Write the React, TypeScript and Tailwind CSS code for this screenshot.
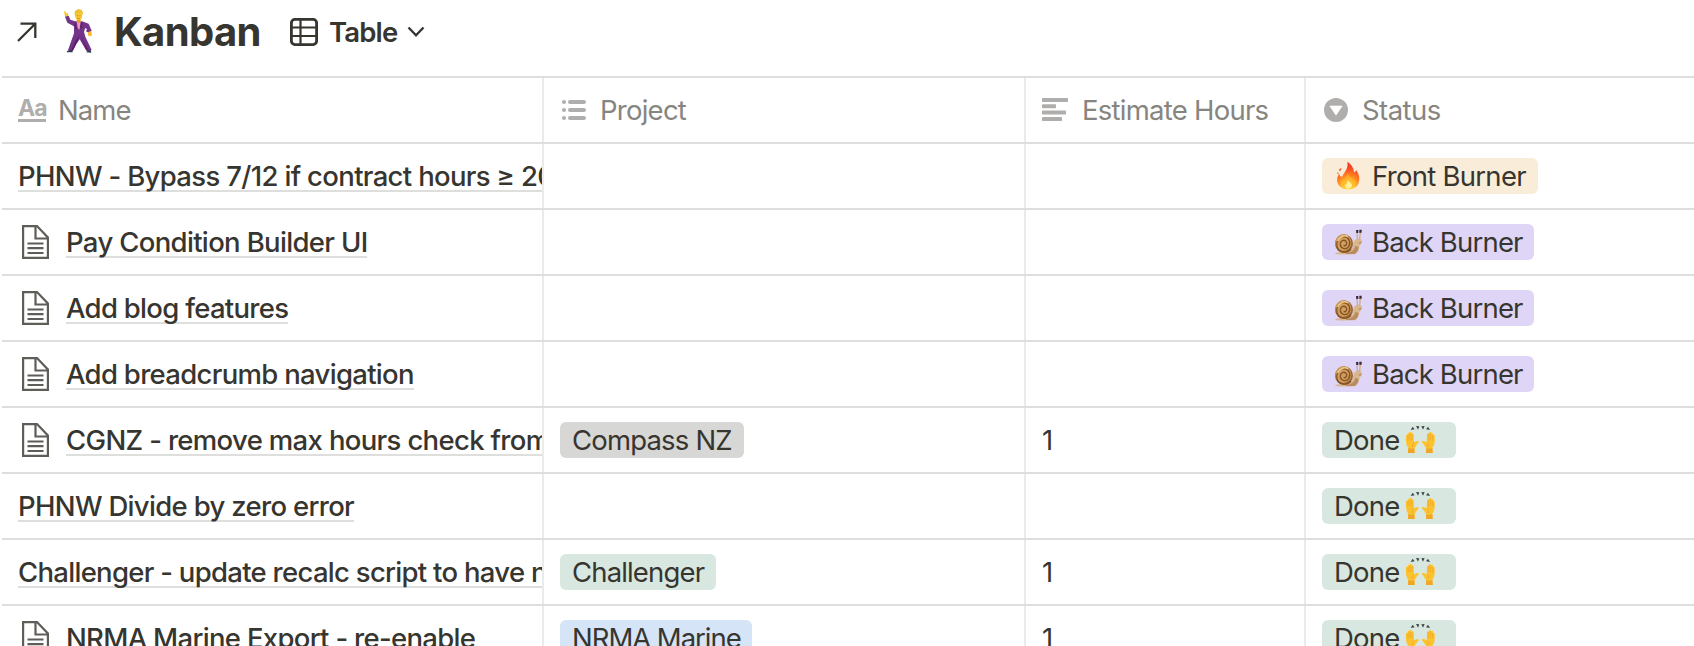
import type { ReactNode } from "react";

const Dancer = () => (
  <svg width="44" height="54" viewBox="0 0 132 162" className="shrink-0">
    <path d="M39 138 L33 142 L32 145 L50 145 L49 137Z M92 137 L94 142 L90 145 L106 146 L104 136Z" fill="#2c3d50" />
    <path d="M24 23 L28 20 L29 27 L36 28 L37 35 L28 40Z" fill="#f8c02c" />
    <path d="M27 38 L38 35 L43 47 L57 52 L78 52 L98 59 L107 80 L100 88 L90 82 L93 76 L88 72 L84 83 L88 98 L107 138 L91 140 L71 106 L61 120 L51 140 L36 139 L45 113 L54 88 L54 67 L34 56Z" fill="#74348a" />
    <path d="M70 94 L64 113 L50 140 L45 140 L58 112Z M73 94 L82 110 L97 138 L92 139Z" fill="#552066" />
    <path d="M62 50 L75 50 L70 78 L65 72Z" fill="#ef9ac6" />
    <path d="M57 54 L64 76 L60 77 L54 64Z M75 53 L72 76 L79 71 L80 57Z" fill="#5c2569" />
    <path d="M63 44 H74 V53 L68 57 L62 52Z" fill="#e49d1c" />
    <ellipse cx="68" cy="35" rx="10.5" ry="14" fill="#fbc62f" />
    <path d="M56 33 C54 20 61 16 69 16 C79 16 83 25 80 34 L76 27 L62 27 L60 38Z" fill="#ecc138" />
    <path d="M64 42 Q68 46 72 42" stroke="#8a5a10" strokeWidth="1.5" fill="none" />
    <path d="M64 35 h2 M71 35 h2" stroke="#6d4710" strokeWidth="2" />
    <path d="M97 84 L105 81 L108 90 L106 97 L101 95 L99 97 L95 92Z" fill="#f8b92c" />
  </svg>
);

const Fire = () => (
  <svg width="40" height="36" viewBox="0 0 120 108" className="shrink-0">
    <defs>
      <radialGradient id="fire" gradientUnits="userSpaceOnUse" cx="61" cy="86" r="68">
        <stop offset="0" stopColor="#fff36a" />
        <stop offset="0.28" stopColor="#ffc02c" />
        <stop offset="0.52" stopColor="#ff7f22" />
        <stop offset="0.8" stopColor="#fb4c22" />
        <stop offset="1" stopColor="#ef3b20" />
      </radialGradient>
    </defs>
    <path d="M58 11 C64 15 77 25 78 42 C80 44 83 41 84 36 C95 50 96 65 91 77 C86 89 74 94 61 94 C44 94 31 85 28 71 C26 61 29 53 34 47 C35 53 38 57 42 56 C49 43 62 30 58 11Z" fill="url(#fire)" />
    <path d="M40 30 C36 31 32 35 33 39 C37 40 41 36 40 30Z M29 42 C27 45 28 49 31 49 C33 47 32 44 29 42Z" fill="#fb5a30" />
    <path d="M59 45 C62 56 74 60 75 72 C79 70 80 66 80 62 C86 76 77 91 62 91 C45 91 38 78 43 66 C45 71 48 73 51 71 C50 61 59 57 59 45Z" fill="#ffb72b" opacity="0.75" />
    <path d="M61 65 C62 73 72 74 72 82 C72 89 67 91 61 91 C53 91 49 85 51 78 C53 82 56 81 56 77 C56 73 59 70 61 65Z" fill="#fff6a0" opacity="0.9" />
  </svg>
);

const Snail = () => (
  <svg width="40" height="36" viewBox="0 0 120 108" className="shrink-0">
    <path d="M20 89 C28 82 40 86 53 84 C68 83 74 76 75 64 C76 53 79 47 86 45 C94 42 103 46 102 53 C101 60 95 62 94 68 C92 82 87 91 75 91 C55 92 35 92 20 89Z" fill="#d9b78e" />
    <path d="M54 86 C70 86 78 80 82 66 L92 68 C90 83 84 90 74 90 L54 90Z" fill="#b98b62" />
    <path d="M88 46 L87 24 M95 46 L97 23" stroke="#c9a680" strokeWidth="3.5" />
    <path d="M84 18 h7 v9 h-6Z M94 17 h7 v9 h-7Z" fill="#3b2a36" />
    <ellipse cx="48" cy="59" rx="27" ry="28" fill="#996330" />
    <ellipse cx="46" cy="56" rx="24" ry="25" fill="#cf9d5c" />
    <path d="M69 74 C62 88 37 88 29 73 C21 57 32 38 48 38 C63 39 70 55 62 68 C55 78 39 75 37 62 C36 51 47 45 54 52 C60 59 53 68 47 64" fill="none" stroke="#855225" strokeWidth="4" />
    <path d="M29 51 C34 39 48 31 60 38" fill="none" stroke="#ebc88d" strokeWidth="5" />
    <path d="M93 57 Q97 58 100 55" stroke="#80552e" strokeWidth="2" fill="none" />
  </svg>
);

const Hands = () => (
  <svg width="40" height="36" viewBox="0 0 120 108" className="shrink-0">
    <path d="M32 24 L38 14 L44 22Z M48 12 L58 13 L54 23Z M64 13 L74 12 L69 23Z M78 22 L84 14 L90 24Z" fill="#3f474a" />
    <g id="hand">
      <path d="M24 93 L25 77 C18 70 17 57 18 41 C18 37 23 37 23 42 V36 C23 32 28 31 29 36 V32 C30 28 35 29 35 33 V37 C36 32 41 33 41 38 L42 61 C45 60 49 56 54 57 C59 59 55 63 51 67 C48 72 46 76 43 79 L44 93Z" fill="#fcc32e" />
      <path d="M24 39 V55 M30 35 V54 M36 36 V55" stroke="#e8a022" strokeWidth="1.8" />
      <path d="M25 78 Q34 82 43 78 L44 93 H24Z" fill="#f0a629" />
      <path d="M42 62 C37 65 36 71 38 75" fill="none" stroke="#e89e23" strokeWidth="2" />
    </g>
    <use href="#hand" transform="translate(122 0) scale(-1 1)" />
  </svg>
);

const Doc = () => (
  <svg width="27" height="34" viewBox="0 0 27 34" fill="none" stroke="#5f5d58" strokeWidth="2.2" className="ml-1 mr-[17px] shrink-0">
    <path d="M1.1 1.1 H15 L25.9 12.5 V32.9 H1.1Z M13.5 1 V13.5 H26" />
    <path d="M5.5 18.5 H21.5 M5.5 23.2 H21.5 M5.5 28 H21.5" />
  </svg>
);

type Row = { name: string; nameCls: string; doc?: boolean; project?: ReactNode; hours?: string; status: ReactNode };

const Tag = ({ cls, children }: { cls: string; children: ReactNode }) => (
  <div className={`flex h-9 shrink-0 items-center rounded-[6px] ${cls}`}>{children}</div>
);

const Front = () => (
  <Tag cls="w-[216px] bg-[#f9edd9] pl-[6px]">
    <Fire />
    <span className="ml-1 tracking-[-0.72px]">Front Burner</span>
  </Tag>
);
const Back = () => (
  <Tag cls="w-[212px] bg-[#dfd6f7] pl-[6px]">
    <Snail />
    <span className="ml-1 tracking-[-0.82px]">Back Burner</span>
  </Tag>
);
const Done = () => (
  <Tag cls="w-[134px] bg-[#d9e7e1] pl-3">
    <span className="w-[66px] tracking-[-0.8px]">Done</span>
    <Hands />
  </Tag>
);

const rows: Row[] = [
  { name: "PHNW - Bypass 7/12 if contract hours ≥ 20", nameCls: "tracking-[-0.67px]", status: <Front /> },
  { name: "Pay Condition Builder UI", nameCls: "tracking-[-0.66px]", doc: true, status: <Back /> },
  { name: "Add blog features", nameCls: "tracking-[-0.7px]", doc: true, status: <Back /> },
  { name: "Add breadcrumb navigation", nameCls: "tracking-[-0.69px]", doc: true, status: <Back /> },
  {
    name: "CGNZ - remove max hours check from",
    nameCls: "tracking-[-0.66px]",
    doc: true,
    project: <Tag cls="w-[184px] bg-[#d7d7d5] pl-3 tracking-[-0.82px]">Compass NZ</Tag>,
    hours: "1",
    status: <Done />,
  },
  { name: "PHNW Divide by zero error", nameCls: "tracking-[-0.68px]", status: <Done /> },
  {
    name: "Challenger - update recalc script to have new",
    nameCls: "tracking-[-0.71px]",
    project: <Tag cls="w-[156px] bg-[#d9e7e1] pl-3 tracking-[-0.85px]">Challenger</Tag>,
    hours: "1",
    status: <Done />,
  },
  {
    name: "NRMA Marine Export - re-enable",
    nameCls: "tracking-[-0.69px]",
    doc: true,
    project: <Tag cls="w-[192px] bg-[#d6e4f7] pl-3 tracking-[-1.02px]">NRMA Marine</Tag>,
    hours: "1",
    status: <Done />,
  },
];

const grid = "grid h-[66px] shrink-0 grid-cols-[542px_482px_280px_1fr] border-b-2 border-[#dededd]";
const cell = "flex min-w-0 items-center overflow-hidden border-r-2 border-[#ebebea] pl-4";

export default function App() {
  return (
    <div className="flex h-[646px] w-full flex-col overflow-hidden whitespace-nowrap bg-white pl-[2px] font-['Inter',sans-serif] text-[27.5px] leading-[36px] text-[#37352f]">
      <header className="flex h-[76px] shrink-0 items-start pl-[15px]">
        <svg width="20" height="20" viewBox="0 0 20 20" fill="none" stroke="#37352f" strokeWidth="2.3" className="mt-[22px] shrink-0">
          <path d="M1 19 L18 2 M3.5 1.6 H18.3 V16" />
        </svg>
        <div className="ml-[19px] mt-1 flex">
          <Dancer />
        </div>
        <h1 className="ml-[14px] mt-[7px] w-[176px] text-[40px] font-bold leading-[49px] tracking-[-0.65px]">Kanban</h1>
        <svg width="28" height="28" viewBox="0 0 28 28" fill="none" stroke="#37352f" className="mt-[18px] shrink-0">
          <rect x="1.4" y="1.4" width="25.2" height="25.2" rx="3.5" strokeWidth="2.8" />
          <path d="M10.5 2 V26 M2 9.5 H26 M2 18 H26" strokeWidth="2.2" />
        </svg>
        <span className="ml-[11px] mt-[14px] w-[75px] font-semibold tracking-[-0.85px]">Table</span>
        <svg width="18" height="12" viewBox="0 0 18 12" fill="none" stroke="#37352f" strokeWidth="2.3" className="ml-[3px] mt-[26px] shrink-0">
          <path d="M1.5 1.5 L9 9.3 L16.5 1.5" />
        </svg>
      </header>

      <div className={`${grid} h-[68px] border-t-2 text-[#868580]`}>
        <div className={cell}>
          <span className="-mt-[2px] h-[26px] w-7 shrink-0 border-b-[3px] border-[#afaeac] text-[23px] font-bold leading-[24px] tracking-[-1px] text-[#afaeac]">Aa</span>
          <span className="ml-3 tracking-[-0.9px]">Name</span>
        </div>
        <div className={cell}>
          <svg width="24" height="20" viewBox="0 0 24 20" fill="#afaeac" className="ml-[2px] shrink-0">
            <circle cx="2" cy="2" r="2" />
            <circle cx="2" cy="10" r="2" />
            <circle cx="2" cy="18" r="2" />
            <rect x="6" width="18" height="4" rx="2" />
            <rect x="6" y="8" width="18" height="4" rx="2" />
            <rect x="6" y="16" width="18" height="4" rx="2" />
          </svg>
          <span className="ml-[14px] tracking-[-0.75px]">Project</span>
        </div>
        <div className={cell}>
          <svg width="26" height="23" viewBox="0 0 26 23" fill="#afaeac" className="-mt-px shrink-0">
            <rect width="26" height="4" rx="0.8" />
            <rect y="6.3" width="14" height="4" rx="0.8" />
            <rect y="12.6" width="24" height="4" rx="0.8" />
            <rect y="19" width="20" height="4" rx="0.8" />
          </svg>
          <span className="ml-[14px] tracking-[-0.75px]">Estimate Hours</span>
        </div>
        <div className="flex items-center pl-[18px]">
          <svg width="24" height="24" viewBox="0 0 24 24" className="shrink-0">
            <circle cx="12" cy="12" r="12" fill="#afaeac" />
            <path d="M5.8 8 H18.2 L12 17.2Z" fill="#fff" stroke="#fff" strokeWidth="0.6" strokeLinejoin="round" />
          </svg>
          <span className="ml-[14px] tracking-[-0.55px]">Status</span>
        </div>
      </div>

      {rows.map((r) => (
        <div key={r.name} className={grid}>
          <div className={cell}>
            {r.doc && <Doc />}
            <span className={`-mb-[2px] shrink-0 border-b-2 border-[#dededd] font-medium leading-[28px] ${r.nameCls}`}>{r.name}</span>
          </div>
          <div className={cell}>{r.project}</div>
          <div className={cell}>{r.hours}</div>
          <div className="flex items-center pl-4">{r.status}</div>
        </div>
      ))}
    </div>
  );
}
